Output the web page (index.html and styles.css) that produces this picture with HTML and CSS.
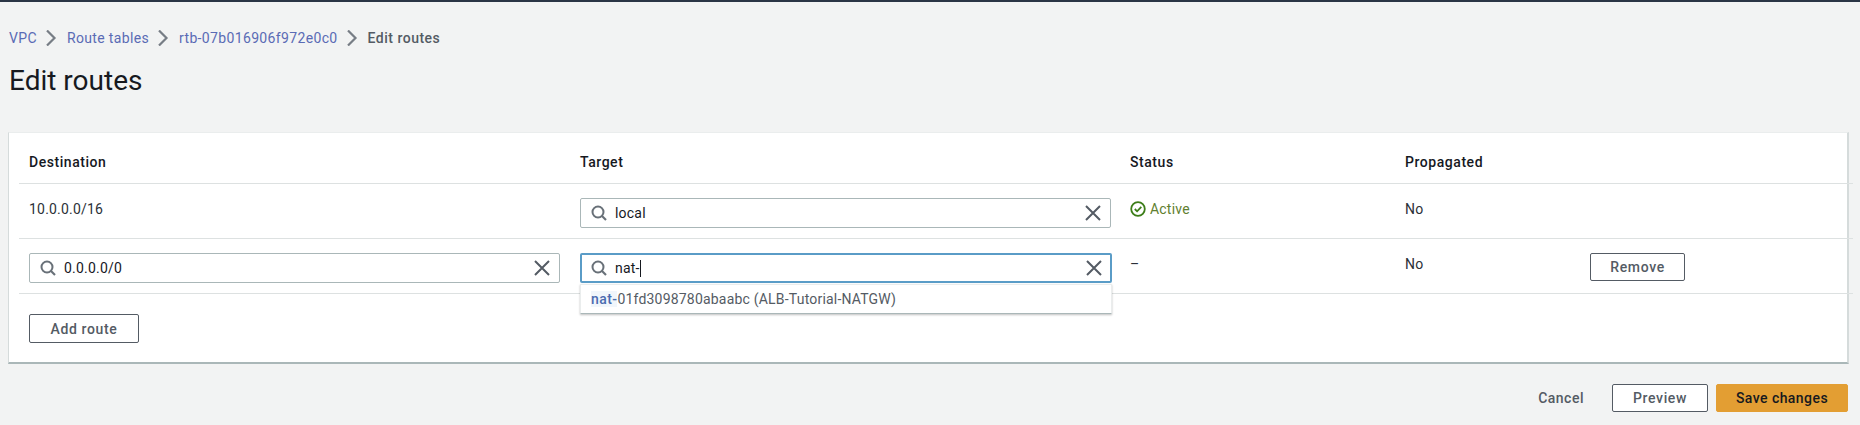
FILE: index.html
```html
<!DOCTYPE html>
<html>
<head>
    <title>Edit routes</title>
    <link rel="stylesheet" href="styles.css">
</head>
<body>
    <svg class="sprites" width="0" height="0">
        <symbol id="search" viewBox="0 0 16 16">
            <circle cx="7" cy="7" r="5.5" fill="none" stroke="currentColor" stroke-width="2"/>
            <path d="M11 11l4 4" fill="none" stroke="currentColor" stroke-width="2.2"/>
        </symbol>
        <symbol id="clear" viewBox="0 0 16 16">
            <path d="M1 1l14 14M15 1L1 15" fill="none" stroke="currentColor" stroke-width="2"/>
        </symbol>
        <symbol id="chevron" viewBox="0 0 16 16">
            <path d="M4 .5l7.5 7.5L4 15.5" fill="none" stroke="currentColor" stroke-width="2.2"/>
        </symbol>
    </svg>

    <div class="topbar"></div>

    <nav class="breadcrumbs">
        <a href="#">VPC</a>
        <svg class="chevron"><use href="#chevron"/></svg>
        <a href="#">Route tables</a>
        <svg class="chevron"><use href="#chevron"/></svg>
        <a href="#">rtb-07b016906f972e0c0</a>
        <svg class="chevron"><use href="#chevron"/></svg>
        <span class="current">Edit routes</span>
    </nav>

    <h1 class="page-title">Edit routes</h1>

    <div class="card">
        <div class="row head">
            <div>Destination</div>
            <div>Target</div>
            <div>Status</div>
            <div>Propagated</div>
        </div>

        <div class="row">
            <div class="cell">10.0.0.0/16</div>
            <div class="search">
                <svg class="icon"><use href="#search"/></svg>
                <span class="value">local</span>
                <svg class="clear"><use href="#clear"/></svg>
            </div>
            <div class="cell active">
                <svg class="check" viewBox="0 0 16 16">
                    <circle cx="8" cy="8" r="6.8" fill="none" stroke="currentColor" stroke-width="1.8"/>
                    <path d="M4.8 8l2.3 2.3 4.2-4.4" fill="none" stroke="currentColor" stroke-width="1.8"/>
                </svg>
                Active
            </div>
            <div class="cell">No</div>
        </div>

        <div class="row">
            <div class="search">
                <svg class="icon"><use href="#search"/></svg>
                <span class="value">0.0.0.0/0</span>
                <svg class="clear"><use href="#clear"/></svg>
            </div>
            <div class="target">
                <div class="search focused">
                    <svg class="icon"><use href="#search"/></svg>
                    <span class="value">nat-</span><span class="caret"></span>
                    <svg class="clear"><use href="#clear"/></svg>
                </div>
                <div class="dropdown"><mark>nat-</mark>01fd3098780abaabc (ALB-Tutorial-NATGW)</div>
            </div>
            <div class="cell">–</div>
            <div class="cell">No</div>
            <div><button class="btn small">Remove</button></div>
        </div>

        <div class="card-foot">
            <button class="btn add">Add route</button>
        </div>
    </div>

    <div class="actions">
        <a class="cancel" href="#">Cancel</a>
        <button class="btn preview">Preview</button>
        <button class="btn primary">Save changes</button>
    </div>
</body>
</html>
```

FILE: styles.css
```css
* {
    box-sizing: border-box;
}
body {
    margin: 0;
    height: 425px;
    overflow: hidden;
    background-color: #f2f3f3;
    color: #16191f;
    font-family: Roboto, "Liberation Sans", sans-serif;
    font-size: 14px;
    line-height: 20px;
    letter-spacing: 0.2px;
}
.sprites {
    display: block;
    height: 0;
}
.topbar {
    height: 2px;
    background-color: #2a3545;
}
.breadcrumbs {
    display: flex;
    align-items: center;
    height: 20px;
    margin-top: 26px;
    padding-left: 9px;
}
.breadcrumbs a {
    color: #5a6bb5;
    letter-spacing: 0.35px;
    text-decoration: none;
}
.breadcrumbs .current {
    color: #545b64;
    font-weight: 500;
    letter-spacing: 0.5px;
}
.chevron {
    width: 16px;
    height: 16px;
    margin: 0 8px 0 6px;
    color: #777d85;
}
.page-title {
    margin: 15px 0 0 9px;
    height: 36px;
    font-size: 28px;
    line-height: 36px;
    font-weight: 400;
    letter-spacing: 0;
}
.card {
    width: 1841px;
    height: 232px;
    margin: 33px 0 0 8px;
    background-color: #fff;
    border-top: 1px solid #eaeded;
    border-left: 1px solid #d5dbdb;
    border-right: 2px solid #d5dbdb;
    border-bottom: 2px solid #aab7b8;
}
.row {
    display: grid;
    grid-template-columns: 551px 550px 275px 185px 94px;
    height: 55px;
    margin: 0 -6px 0 10px;
    padding: 14px 0 0 10px;
    border-bottom: 1px solid #dde1e1;
}
.row.head {
    height: 51px;
    padding-top: 19px;
    font-weight: 500;
    letter-spacing: 0.55px;
}
.cell {
    padding-top: 1px;
    color: #2b3038;
}
.active {
    display: flex;
    align-items: flex-start;
    gap: 4px;
    color: #5f8030;
}
.check {
    width: 16px;
    height: 16px;
    margin-top: 2px;
    color: #3c7d18;
}
.target {
    position: relative;
}
.search {
    display: flex;
    align-items: center;
    width: 531px;
    height: 30px;
    padding: 0 9px 0 10px;
    border: 1px solid #aab7b8;
    border-radius: 2px;
    background-color: #fff;
}
.search.focused {
    width: 532px;
    border: 2px solid #5a9cc7;
    padding: 0 8px 0 9px;
}
.search .icon {
    width: 16px;
    height: 16px;
    margin-right: 8px;
    color: #687078;
}
.search .value {
    flex: none;
}
.search .clear {
    width: 16px;
    height: 16px;
    margin-left: auto;
    color: #545b64;
}
.caret {
    width: 1px;
    height: 17px;
    background-color: #16191f;
}
.dropdown {
    position: absolute;
    top: 31px;
    left: 0;
    width: 532px;
    height: 30px;
    padding: 4px 0 0 10px;
    background-color: #fff;
    border: 1px solid #eaeded;
    border-bottom: 1px solid #aab7b8;
    box-shadow: 0 1px 2px rgba(0, 0, 0, 0.25);
    color: #545b64;
}
.dropdown mark {
    background-color: #f1f6fb;
    color: #4a6cb0;
    font-weight: 500;
    letter-spacing: 0.4px;
}
.btn {
    padding: 0;
    border: 1px solid #545b64;
    border-radius: 2px;
    background-color: #fff;
    color: #545b64;
    font: 500 14px/20px Roboto, "Liberation Sans", sans-serif;
    letter-spacing: 0.65px;
}
.btn.small {
    width: 95px;
    height: 28px;
}
.card-foot {
    padding: 20px 0 0 20px;
}
.btn.add {
    width: 110px;
    height: 29px;
}
.actions {
    display: flex;
    justify-content: flex-end;
    align-items: center;
    gap: 8px;
    width: 1848px;
    margin-top: 20px;
}
.cancel {
    margin-right: 20px;
    color: #545b64;
    font-weight: 500;
    letter-spacing: 0.5px;
    text-decoration: none;
}
.btn.preview {
    width: 96px;
    height: 28px;
}
.btn.primary {
    width: 132px;
    height: 28px;
    border-color: #e39e33;
    background-color: #e39e33;
    color: #16191f;
    letter-spacing: 0.45px;
}
```
